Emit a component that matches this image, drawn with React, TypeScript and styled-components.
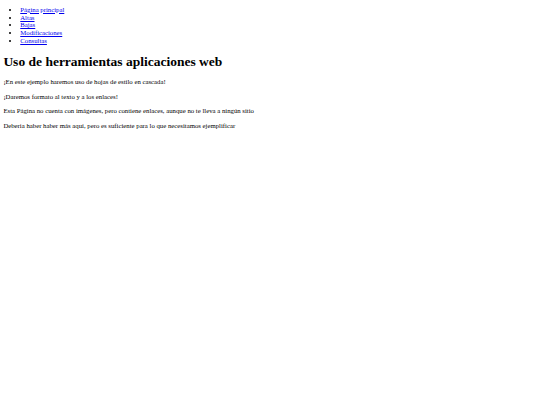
import React from "react";
import styled, { createGlobalStyle } from "styled-components";

// the page is the browser's default look, seen at 540/1280 of its size
const s = 540 / 1280;
const px = (n: number) => `${n * s}px`;

const GlobalStyle = createGlobalStyle`
    html, body {
        background: #fff;
    }

    body {
        margin: ${px(8)};
        font-family: "Liberation Serif", "Times New Roman", serif;
        font-size: ${px(16)};
        line-height: 7.75px;
        color: #000;
    }
`;

const Menu = styled.ul`
    margin: ${px(6)} 0 ${px(16)};
    padding-left: ${px(40)};
    list-style: disc;
`;

const MenuItem = styled.li`
    line-height: 7.75px;
`;

const MenuLink = styled.a`
    color: #0000ee;
    text-decoration: underline;
`;

const Title = styled.h1`
    font-size: ${px(32)};
    line-height: 15.5px;
    font-weight: 700;
    margin: ${px(21.44)} 0;
`;

const Text = styled.p`
    margin: ${px(16)} 0;
    line-height: 7.75px;
`;

const links = ["Página principal", "Altas", "Bajas", "Modificaciones", "Consultas"];

export default function App() {
    return (
        <>
            <GlobalStyle />
            <Menu>
                {links.map((l) => (
                    <MenuItem key={l}>
                        <MenuLink href="#">{l}</MenuLink>
                    </MenuItem>
                ))}
            </Menu>
            <Title>Uso de herramientas aplicaciones web</Title>
            <Text>¡En este ejemplo haremos uso de hojas de estilo en cascada!</Text>
            <Text>¡Daremos formato al texto y a los enlaces!</Text>
            <Text>Esta Página no cuenta con imágenes, pero contiene enlaces, aunque no te lleva a ningún sitio</Text>
            <Text>Deberia haber haber más aquí, pero es suficiente para lo que necesitamos ejemplificar</Text>
        </>
    );
}
